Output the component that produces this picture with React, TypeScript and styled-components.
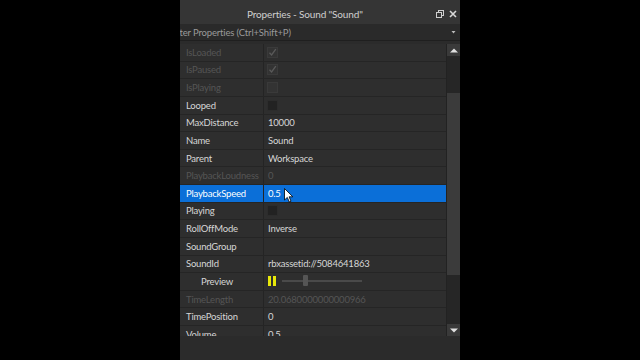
import React from "react";
import styled, { createGlobalStyle } from "styled-components";

const Global = createGlobalStyle`
  html, body { margin: 0; padding: 0; background: #000; }
  body { width: 640px; height: 360px; overflow: hidden; font-family: "Lato", "Noto Sans", sans-serif; }
`;

const Stage = styled.div`
  width: 640px;
  height: 360px;
  display: flex;
  justify-content: center;
  background: #000;
`;

const Panel = styled.div`
  width: 280px;
  height: 360px;
  background: #2b2b2b;
  display: flex;
  flex-direction: column;
`;

const TitleBar = styled.div`
  height: 24px;
  box-sizing: border-box;
  padding-top: 4px;
  flex: none;
  background: #353535;
  display: flex;
  align-items: center;
  color: #cfcfcf;
  font-size: 10px;
  letter-spacing: -0.15px;
`;

const TitleText = styled.div`
  flex: 1;
  padding-left: 67px;
  white-space: nowrap;
`;

const TitleIcons = styled.div`
  display: flex;
  gap: 5px;
  padding-right: 3px;
  align-items: center;
`;

const FilterBar = styled.div`
  height: 16px;
  flex: none;
  background: #2a2a2a;
  border-bottom: 1px solid #1f1f1f;
  display: flex;
  align-items: center;
  overflow: hidden;
  color: #9a9a9a;
  font-size: 9.5px;
  letter-spacing: -0.15px;
`;

const FilterText = styled.div`
  flex: 1;
  white-space: nowrap;
  margin-left: -10px;
`;

const Body = styled.div`
  display: flex;
  margin-top: 3px;
  height: 292px;
  flex: none;
  background: #2e2e2e;
  overflow: hidden;
`;

const List = styled.div`
  flex: 1;
  overflow: hidden;
`;

const Row = styled.div<{ $sel?: boolean }>`
  height: 17.625px;
  box-sizing: border-box;
  border-bottom: 1px solid #252525;
  display: grid;
  grid-template-columns: 84px 1fr;
  background: ${(p) => (p.$sel ? "#0b6fd8" : "#2e2e2e")};
  font-size: 9.5px;
  letter-spacing: -0.2px;
  position: relative;
`;

const NameCell = styled.div<{ $dim?: boolean; $indent?: boolean; $sel?: boolean }>`
  display: flex;
  align-items: center;
  padding-left: ${(p) => (p.$indent ? "21px" : "6px")};
  color: ${(p) => (p.$sel ? "#ffffff" : p.$dim ? "#555555" : "#d6d6d6")};
  border-right: 1px solid #242424;
  white-space: nowrap;
  overflow: hidden;
`;

const ValueCell = styled.div<{ $dim?: boolean; $sel?: boolean }>`
  display: flex;
  align-items: center;
  padding-left: 4px;
  color: ${(p) => (p.$sel ? "#ffffff" : p.$dim ? "#555555" : "#d6d6d6")};
  white-space: nowrap;
  overflow: hidden;
`;

const Check = styled.div<{ $dim?: boolean }>`
  width: 11px;
  height: 11px;
  margin-left: -1px;
  box-sizing: border-box;
  background: ${(p) => (p.$dim ? "#333333" : "#222222")};
  border: 1px solid ${(p) => (p.$dim ? "#3a3a3a" : "#2c2c2c")};
  display: flex;
  align-items: center;
  justify-content: center;
`;

const Scroll = styled.div`
  width: 13px;
  flex: none;
  background: #262626;
  display: flex;
  flex-direction: column;
  border-left: 1px solid #222;
`;

const ScrollBtn = styled.div`
  height: 12px;
  flex: none;
  background: #3a3a3a;
  display: flex;
  align-items: center;
  justify-content: center;
`;

const Track = styled.div`
  flex: 1;
  display: flex;
  flex-direction: column;
`;

const Thumb = styled.div`
  margin-top: 37px;
  height: 182px;
  background: #3b3b3b;
`;

const Slider = styled.div`
  display: flex;
  align-items: center;
  gap: 6px;
`;

const Rail = styled.div`
  width: 80px;
  height: 2px;
  background: #4a4a4a;
  position: relative;
`;

const Knob = styled.div`
  position: absolute;
  left: 21px;
  top: -5px;
  width: 5px;
  height: 11px;
  background: #555;
  border-radius: 1px;
`;

const PauseIcon = () => (
  <svg width="8" height="10" viewBox="0 0 8 10">
    <rect x="0" y="0" width="3" height="10" fill="#e8e80a" />
    <rect x="5" y="0" width="3" height="10" fill="#e8e80a" />
  </svg>
);

const Tick = () => (
  <svg width="9" height="9" viewBox="0 0 9 9">
    <path d="M1.5 4.8 L3.6 7 L7.8 1.2" stroke="#5a5a5a" strokeWidth="1.3" fill="none" />
  </svg>
);

const Cursor = styled.svg`
  position: absolute;
  left: 104px;
  top: 3px;
`;

type P = { name: string; value?: string; dim?: boolean; check?: "on" | "off"; sel?: boolean; indent?: boolean; preview?: boolean };

const rows: P[] = [
  { name: "IsLoaded", dim: true, check: "on" },
  { name: "IsPaused", dim: true, check: "on" },
  { name: "IsPlaying", dim: true, check: "off" },
  { name: "Looped", check: "off" },
  { name: "MaxDistance", value: "10000" },
  { name: "Name", value: "Sound" },
  { name: "Parent", value: "Workspace" },
  { name: "PlaybackLoudness", value: "0", dim: true },
  { name: "PlaybackSpeed", value: "0.5", sel: true },
  { name: "Playing", check: "off" },
  { name: "RollOffMode", value: "Inverse" },
  { name: "SoundGroup", value: "" },
  { name: "SoundId", value: "rbxassetid://5084641863" },
  { name: "Preview", indent: true, preview: true },
  { name: "TimeLength", value: "20.0680000000000966", dim: true },
  { name: "TimePosition", value: "0" },
  { name: "Volume", value: "0.5" },
];

export default function App() {
  return (
    <Stage>
      <Global />
      <Panel>
        <TitleBar>
          <TitleText>Properties - Sound "Sound"</TitleText>
          <TitleIcons>
            <svg width="8" height="8" viewBox="0 0 8 8">
              <rect x="2.5" y="0.5" width="5" height="5" fill="none" stroke="#cfcfcf" />
              <rect x="0.5" y="2.5" width="5" height="5" fill="#353535" stroke="#cfcfcf" />
            </svg>
            <svg width="8" height="8" viewBox="0 0 8 8">
              <path d="M1 1 L7 7 M7 1 L1 7" stroke="#d8d8d8" strokeWidth="1.6" />
            </svg>
          </TitleIcons>
        </TitleBar>
        <FilterBar>
          <FilterText>Filter Properties (Ctrl+Shift+P)</FilterText>
          <svg width="13" height="6" viewBox="0 0 13 6">
            <path d="M4.5 2 L8.5 2 L6.5 4.5 Z" fill="#bbb" />
          </svg>
        </FilterBar>
        <Body>
          <List>
            {rows.map((r) => (
              <Row key={r.name} $sel={r.sel}>
                <NameCell $dim={r.dim} $indent={r.indent} $sel={r.sel}>{r.name}</NameCell>
                <ValueCell $dim={r.dim} $sel={r.sel}>
                  {r.check ? (
                    <Check $dim={r.dim}>{r.check === "on" ? <Tick /> : null}</Check>
                  ) : r.preview ? (
                    <Slider>
                      <PauseIcon />
                      <Rail>
                        <Knob />
                      </Rail>
                    </Slider>
                  ) : (
                    r.value
                  )}
                </ValueCell>
                {r.sel ? (
                  <Cursor width="10" height="16" viewBox="0 0 10 16">
                    <path d="M0.5 0.5 L0.5 12 L3.3 9.4 L5.3 14 L7 13.2 L5.1 8.8 L8.8 8.8 Z" fill="#fff" stroke="#000" strokeWidth="0.8" />
                  </Cursor>
                ) : null}
              </Row>
            ))}
          </List>
          <Scroll>
            <ScrollBtn>
              <svg width="8" height="5" viewBox="0 0 8 5"><path d="M0 4.5 L8 4.5 L4 0.5 Z" fill="#e0e0e0" /></svg>
            </ScrollBtn>
            <Track>
              <Thumb />
            </Track>
            <ScrollBtn>
              <svg width="8" height="5" viewBox="0 0 8 5"><path d="M0 0.5 L8 0.5 L4 4.5 Z" fill="#e0e0e0" /></svg>
            </ScrollBtn>
          </Scroll>
        </Body>
      </Panel>
    </Stage>
  );
}
